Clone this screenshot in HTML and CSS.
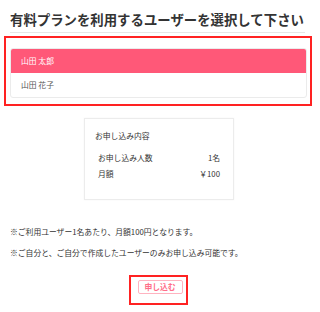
FILE: index.html
```html
<!DOCTYPE html>
<html lang="ja">
<head>
<meta charset="utf-8">
<link rel="stylesheet" href="styles.css">
</head>
<body>
<div class="page">
  <h1 class="title">有料プランを利用するユーザーを選択して下さい</h1>
  <div class="highlight users">
    <ul class="user-list">
      <li class="user active">山田 太郎</li>
      <li class="user">山田 花子</li>
    </ul>
  </div>
  <div class="summary">
    <div class="summary-title">お申し込み内容</div>
    <div class="summary-row"><span>お申し込み人数</span><span>1名</span></div>
    <div class="summary-row"><span>月額</span><span>￥100</span></div>
  </div>
  <p class="note first">※ご利用ユーザー1名あたり、月額100円となります。</p>
  <p class="note">※ご自分と、ご自分で作成したユーザーのみお申し込み可能です。</p>
  <div class="btn-wrap">
    <div class="highlight btn-box"><button class="apply">申し込む</button></div>
  </div>
</div>
</body>
</html>
```
FILE: styles.css
```css
* { box-sizing: border-box; }
body {
  margin: 0;
  background: #fff;
  font-family: "Noto Sans CJK JP", "Noto Sans", sans-serif;
  color: #333;
}
.page { width: 318px; }
.title {
  margin: 0 13px 0 10px;
  padding: 10px 0 4px;
  font-size: 13.4px;
  line-height: 18px;
  font-weight: bold;
  color: #333;
  white-space: nowrap;
  border-bottom: 1px solid #e6e6e6;
}
.highlight { border: 2px solid #ff2222; }
.users {
  margin: 3px 0 0 4px;
  width: 308px;
  padding: 10px 3px 6px 4px;
}
.user-list {
  list-style: none;
  margin: 0;
  padding: 0;
  border: 1px solid #ebebeb;
  border-radius: 3px;
  overflow: hidden;
}
.user {
  height: 24px;
  line-height: 24px;
  padding-left: 10px;
  font-size: 7.8px;
  color: #555;
}
.user.active {
  background: #ff5878;
  color: #fff;
}
.summary {
  margin: 12px auto 0;
  width: 150px;
  height: 82px;
  border: 1px solid #ececec;
  box-shadow: 0 0 2px rgba(0,0,0,0.04);
  padding: 11px 13px 0 10px;
  font-size: 7.8px;
}
.summary-title { line-height: 12px; margin-bottom: 8px; }
.summary-row {
  display: flex;
  justify-content: space-between;
  line-height: 16px;
  padding-left: 3px;
}
.note {
  margin: 9px 0 0 10px;
  font-size: 7.8px;
  line-height: 12px;
  white-space: nowrap;
}
.note.first { margin-top: 26px; }
.btn-wrap {
  display: flex;
  justify-content: center;
  margin-top: 16px;
  padding-right: 2px;
}
.btn-box {
  width: 59px;
  padding: 3px 3px 9px 7px;
}
.apply {
  display: block;
  width: 45px;
  height: 14px;
  padding: 0;
  border: 1px solid #ffb3c0;
  border-radius: 2px;
  background: #fff;
  color: #ff6f8a;
  font-family: inherit;
  font-size: 7.8px;
  font-weight: bold;
  line-height: 12px;
}
```
